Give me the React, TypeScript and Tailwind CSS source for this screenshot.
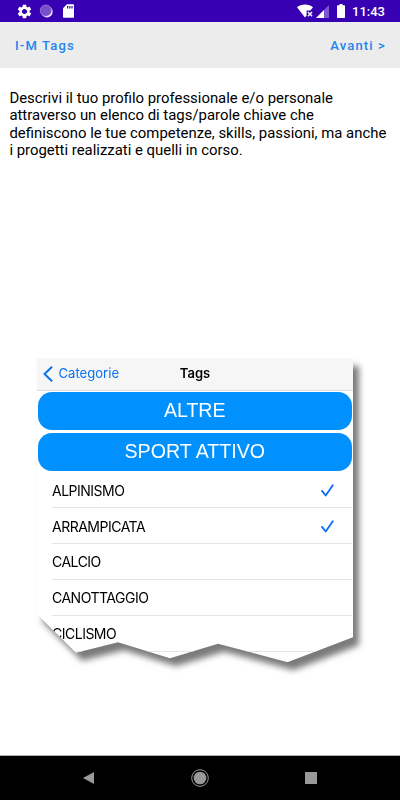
const tags = [
  { name: 'ALPINISMO', checked: true },
  { name: 'ARRAMPICATA', checked: true },
  { name: 'CALCIO', checked: false },
  { name: 'CANOTTAGGIO', checked: false },
  { name: 'CICLISMO', checked: false },
];

const categories = ['ALTRE', 'SPORT ATTIVO'];

function StatusBar() {
  return (
    <div className="flex h-[22px] shrink-0 items-center justify-between bg-[#3700b3] pl-[16.5px] pr-[15px] text-white">
      <div className="flex items-center">
        <svg className="h-[15px] w-[15px]" viewBox="1.5 1.5 21 21" fill="currentColor">
          <path d="M19.14 12.94c.04-.3.06-.61.06-.94 0-.32-.02-.64-.07-.94l2.03-1.58c.18-.14.23-.41.12-.61l-1.92-3.32c-.12-.22-.37-.29-.59-.22l-2.39.96c-.5-.38-1.03-.7-1.62-.94l-.36-2.54c-.04-.24-.24-.41-.48-.41h-3.84c-.24 0-.43.17-.47.41l-.36 2.54c-.59.24-1.13.57-1.62.94l-2.39-.96c-.22-.08-.47 0-.59.22L2.74 8.87c-.12.21-.08.47.12.61l2.03 1.58c-.05.3-.09.63-.09.94s.02.64.07.94l-2.03 1.58c-.18.14-.23.41-.12.61l1.92 3.32c.12.22.37.29.59.22l2.39-.96c.5.38 1.03.7 1.62.94l.36 2.54c.05.24.24.41.48.41h3.84c.24 0 .44-.17.47-.41l.36-2.54c.59-.24 1.13-.56 1.62-.94l2.39.96c.22.08.47 0 .59-.22l1.92-3.32c.12-.22.07-.47-.12-.61l-2.01-1.58zM12 15.6c-1.98 0-3.6-1.62-3.6-3.6s1.62-3.6 3.6-3.6 3.6 1.62 3.6 3.6-1.62 3.6-3.6 3.6z" />
        </svg>
        <svg className="ml-[7.5px] h-[14px] w-[14px]" viewBox="0 0 14 14">
          <circle cx="7.9" cy="7.7" r="5.8" fill="#f3ecfc" />
          <circle cx="6.8" cy="6.5" r="5.8" fill="#7650cc" />
          <circle cx="6.8" cy="6.5" r="5.5" fill="none" stroke="#b39ae4" strokeDasharray="1 1" />
        </svg>
        <svg className="ml-[10px] h-[14px] w-[11px]" viewBox="0 0 11 14" fill="currentColor">
          <path d="M4 .3h6c.6 0 1 .4 1 1v11.4c0 .6-.4 1-1 1H1c-.6 0-1-.4-1-1V4.3z" />
          <path d="M4 2h1.2v2.5H4zM6.2 2h1.2v2.5H6.2zM8.4 2h1.2v2.5H8.4z" fill="#3700b3" />
        </svg>
      </div>
      <div className="flex items-center">
        <svg className="h-[14px] w-[17px]" viewBox="0 0 17 14" fill="currentColor">
          <path d="M0 3.3C2.2 1.5 5 .5 8 .5s5.8 1 8 2.8L13.3 6.6H9.6v5L8 13.5z" />
          <path d="M10.9 8l4.2 4.2M15.1 8l-4.2 4.2" stroke="currentColor" strokeWidth="1.3" />
        </svg>
        <svg className="ml-[2px] h-[13px] w-[13px]" viewBox="0 0 13 13" fill="currentColor">
          <path d="M13 0v13H0z" opacity=".35" />
          <path d="M8 5v8H0z" />
        </svg>
        <svg className="ml-2 h-[14px] w-2" viewBox="0 0 8 14" fill="currentColor">
          <path d="M2.5 0h3v1.3h1.8c.4 0 .7.3.7.7v11.3c0 .4-.3.7-.7.7H.7c-.4 0-.7-.3-.7-.7V2c0-.4.3-.7.7-.7h1.8z" />
        </svg>
        <span className="ml-[7px] text-[13px] font-medium leading-[23px]">11:43</span>
      </div>
    </div>
  );
}

function TopBar() {
  return (
    <div className="flex h-[46px] shrink-0 items-center justify-between bg-[#ececec] px-[15px] pt-px text-[13px] font-medium tracking-[1.15px] text-[#2484ee]">
      <button>I-M Tags</button>
      <button className="mr-[-1px]">Avanti &gt;</button>
    </div>
  );
}

function CheckMark() {
  return (
    <svg className="h-[13px] w-[13px]" viewBox="0 0 13 13" fill="none" stroke="#0a6cff" strokeWidth="1.8" strokeLinecap="round" strokeLinejoin="round">
      <path d="M1 6.9L4.7 11.5L11.8 1.2" />
    </svg>
  );
}

// Torn-paper preview of the tag list
function TagsPreview() {
  return (
    <div className="ml-[37px] mt-[199px] w-[316px] [filter:drop-shadow(6px_8px_3px_rgba(0,0,0,0.52))]">
      <div className="h-[304px] bg-white font-[Inter,sans-serif] [clip-path:polygon(0_0,100%_0,100%_279px,250.5px_304px,181px_285.5px,133px_300px,81px_284px,39px_294.5px,0_256px)]">
        <div className="grid h-[33px] grid-cols-3 items-center border-b border-[#dcdcdc] bg-[#f6f6f6] pb-px text-[13.1px]">
          <div className="flex items-center pl-[5.5px] text-[#0a72f5]">
            <svg className="mr-[6px] h-4 w-[10px]" viewBox="0 0 10 16" fill="none" stroke="currentColor" strokeWidth="2" strokeLinecap="round" strokeLinejoin="round">
              <path d="M8.5 1.2L1.5 8l7 6.8" />
            </svg>
            <span className="whitespace-nowrap">Categorie</span>
          </div>
          <div className="text-center text-[13px] font-semibold text-black">Tags</div>
        </div>
        <div className="flex flex-col gap-[3px] pl-[0.5px] pr-[1px] pt-[1px]">
          {categories.map((category) => (
            <div
              key={category}
              className="flex h-[38px] items-center justify-center rounded-[14px] bg-[#0091ff] font-['Liberation_Sans',sans-serif] text-[19.6px] text-white"
            >
              {category}
            </div>
          ))}
        </div>
        <div className="pl-[15px] pr-[1px] pt-px">
          {tags.map((tag) => (
            <div
              key={tag.name}
              className="flex h-[35.9px] items-center justify-between border-b border-[#e5e5e5] pr-[18px] pt-px text-[14px] tracking-[-0.5px] text-black"
            >
              {tag.name}
              {tag.checked && <CheckMark />}
            </div>
          ))}
        </div>
      </div>
    </div>
  );
}

function NavigationBar() {
  return (
    <div className="mt-auto flex h-[45px] shrink-0 items-center justify-between border-t border-[#a8b0b0] bg-black pl-[83px] pr-[83px]">
      <svg className="h-3 w-[11px]" viewBox="0 0 11 12" fill="#999">
        <path d="M11 0v12L0 6z" />
      </svg>
      <svg className="h-[18px] w-[18px]" viewBox="0 0 18 18">
        <circle cx="9" cy="9" r="8.3" fill="none" stroke="#999" strokeWidth="1" />
        <circle cx="9" cy="9" r="6.3" fill="#999" />
      </svg>
      <div className="h-3 w-3 bg-[#999]" />
    </div>
  );
}

export default function App() {
  return (
    <div className="flex h-[800px] w-[400px] flex-col overflow-hidden bg-white font-[Roboto,sans-serif]">
      <StatusBar />
      <TopBar />
      <p className="ml-[9.4px] mt-[22px] whitespace-nowrap text-[14.9px] leading-[17.3px] text-black">
        Descrivi il tuo profilo professionale e/o personale
        <br />
        attraverso un elenco di tags/parole chiave che
        <br />
        definiscono le tue competenze, skills, passioni, ma anche
        <br />i progetti realizzati e quelli in corso.
      </p>
      <TagsPreview />
      <NavigationBar />
    </div>
  );
}
